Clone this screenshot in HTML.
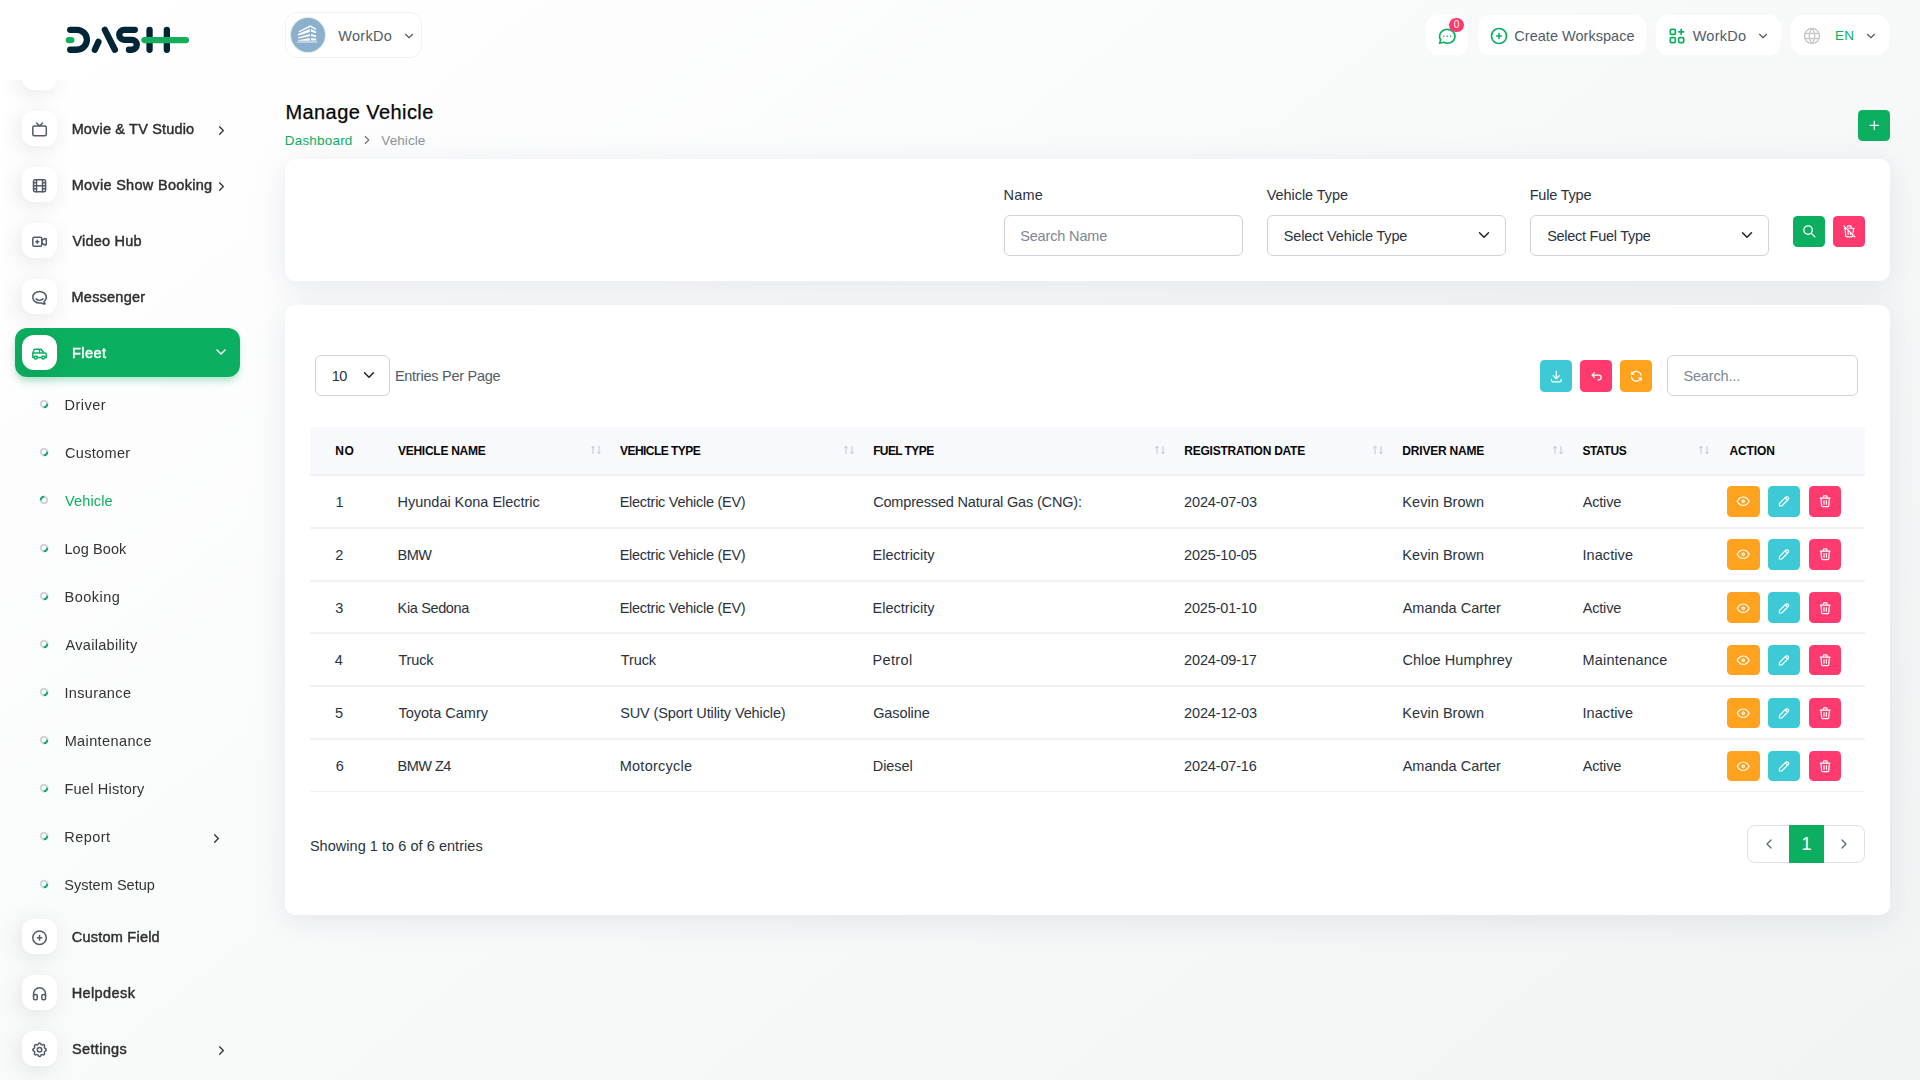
<!DOCTYPE html>
<html lang="en">
<head>
<meta charset="utf-8">
<title>Manage Vehicle</title>
<style>
*{box-sizing:border-box;margin:0;padding:0}
html,body{width:1920px;height:1080px;overflow:hidden}
body{font-family:"Liberation Sans",sans-serif;color:#293240;font-size:14px;
 background:linear-gradient(141.55deg,rgba(240,244,243,0) 3.46%,#f0f4f3 99.86%),#fff;position:relative}
.abs{position:absolute}
svg{display:block}
/* ---------- sidebar ---------- */
#sidebar{position:absolute;left:0;top:0;width:280px;height:1080px}
#sbscroll{position:absolute;left:0;top:80px;width:280px;height:1000px;overflow:hidden;will-change:transform}
.mi{position:absolute;left:15px;width:225px;height:48px;border-radius:12px}
.mi .ib{position:absolute;left:7px;top:6px;width:35px;height:35px;border-radius:12px;background:#fff;
 box-shadow:-3px 4px 23px rgba(0,0,0,.1)}
.mi .ib svg{position:absolute;left:8px;top:9px;width:18px;height:18px}
.mi .tx{position:absolute;left:57px;top:0;line-height:48px;font-size:14.5px;color:#2f2f2f;white-space:nowrap;-webkit-text-stroke:.45px #2f2f2f}
.mi .ar{position:absolute;right:11px;top:18px;width:15px;height:15px}
.mi.act .ar{right:11.5px;top:16.2px;width:16px;height:16px}
.mi.act .ib{top:6.8px}
.mi.act{margin-top:-.8px;height:48.8px;background:#0caf60;box-shadow:0 5px 7px -1px rgba(12,175,96,.3)}
.mi.act .tx{top:.8px;color:#fff;-webkit-text-stroke:.45px #fff}
.si{position:absolute;left:40px;height:48px;width:200px}
.si .bl{position:absolute;left:-1px;top:18px;width:10px;height:10px}
.si .tx{position:absolute;left:25px;top:0;line-height:48px;font-size:14.5px;color:#333;white-space:nowrap}
.si.on .tx{color:#0caf60}
.si .ar{position:absolute;right:15.6px;top:17.5px;width:15px;height:15px}
/* ---------- header ---------- */
.hb{position:absolute;top:15px;height:40px;background:#fff;border-radius:12px;white-space:nowrap}
.hb span{position:absolute;top:.8px;line-height:40px;font-size:14.5px;color:#525b69}
/* ---------- cards ---------- */
.card{position:absolute;background:#fff;border-radius:10px;box-shadow:0 6px 30px rgba(182,186,203,.3)}
.lbl{position:absolute;font-size:14.5px;color:#293240;line-height:20px;white-space:nowrap}
.inp{position:absolute;height:41px;border:1px solid #ced4da;border-radius:6px;background:#fff;
 font-size:14.5px;line-height:40.6px;padding-left:15px;color:#293240;white-space:nowrap}
.inp.ph{color:#7c8794}
.inp svg{position:absolute;right:15px;top:13.2px;width:12px;height:12px}
.btn{position:absolute;width:32px;height:32px;border-radius:4.5px}
.btn svg{position:absolute;left:8.7px;top:8.8px;width:14.6px;height:14.6px}
.h31{height:31px}
.h31 svg{top:8.1px;left:8.5px}
.rb{top:10.5px;height:30.5px}
.rb i{position:absolute;left:50%;top:0;width:0;height:0}
.rb i svg{left:-7.2px;top:8.1px;width:14.4px;height:14.4px}
.g{background:#0caf60}.r{background:#ff3a6e}.c{background:#3ec9d6}.o{background:#ffa21d}
/* ---------- table ---------- */
#thead{position:absolute;left:25px;top:122px;width:1555px;height:47.75px;background:#f8f9fd;border-bottom:1px solid #f1f1f1}
.th{position:absolute;top:0;line-height:48.5px;font-size:12px;font-weight:bold;color:#060606;white-space:nowrap}
.so{position:absolute;top:17.7px;width:12px;height:10px}
.tr{position:absolute;left:25px;width:1555px;height:52.85px;border-top:1px solid #f1f1f1;border-bottom:1px solid #f1f1f1}
.td{position:absolute;top:0;line-height:52px;font-size:14.5px;color:#293240;white-space:nowrap}
</style>
</head>
<body>
<div id="header"><div class="abs" style="left:285px;top:12px;width:137px;height:46px;background:#fff;border:1px solid #f1f1f1;border-radius:12px"><div class="abs" style="left:5px;top:5px;width:34px;height:34px;border-radius:50%;background:#8bafcc;box-shadow:0 0 0 1px #d9f0e3;overflow:hidden"><svg viewBox="0 0 34 34" width="34" height="34"><g fill="#fdfeff"><path d="M7.55 13.27L19.39 7.14L25.1 10.41V12.04L19.39 8.98L8.16 14.29z"/><path d="M6.94 16.12L18.78 11.02V13.88L6.94 17.76z"/><path d="M20 11.02L25.1 13.47V15.31L20 13.67z"/><path d="M6.94 19.39L18.78 15.92V18.37L7.14 20.61z"/><path d="M20 15.92L25.1 17.14V18.98L20 18.16z"/><path d="M7.55 22.24L18.78 20V22.65L7.14 22.86z"/><path d="M20 20.2L25.1 20.61V22.45H20z"/><path d="M5.92 23.06H26.33V25.1H5.92z" fill="#b9d0e2"/></g></svg></div><span id="h_ws" class="abs" style="left:52px;top:1px;line-height:44px;font-size:14.5px;color:#525b69;margin-left:0.20px;letter-spacing:0.301px;">WorkDo</span><svg viewBox="0 0 24 24" fill="none" stroke="#525b69" stroke-width="2" stroke-linecap="round" stroke-linejoin="round" style="position:absolute;left:115.7px;top:15.6px;width:14px;height:14px"><path d="M6 9l6 6l6 -6"/></svg></div>
<div class="hb" style="left:1426px;width:42px"><svg viewBox="0 0 24 24" fill="none" stroke="#0caf60" stroke-width="1.85" stroke-linecap="round" stroke-linejoin="round" style="position:absolute;left:11px;top:11px;width:20.6px;height:20.6px"><path d="M3 20l1.3 -3.9a9 8 0 1 1 3.4 2.9l-4.700 1"/><path d="M12 12v.01M8 12v.01M16 12v.01"/></svg><div class="abs" style="left:23px;top:3px;width:15px;height:14px;border-radius:7px;background:#ff3a6e;color:#fff;font-size:10px;line-height:13.5px;text-align:center">0</div></div>
<div class="hb" style="left:1478px;width:168px"><svg viewBox="0 0 24 24" fill="none" stroke="#0caf60" stroke-width="2" stroke-linecap="round" stroke-linejoin="round" style="position:absolute;left:11.4px;top:11px;width:20px;height:20px"><circle cx="12" cy="12" r="9"/><path d="M9 12h6M12 9v6"/></svg><span id="h_cw" style="left:36px;margin-left:0.35px;letter-spacing:0.024px;">Create Workspace</span></div>
<div class="hb" style="left:1656px;width:125px"><svg viewBox="0 0 24 24" fill="none" stroke="#0caf60" stroke-width="2" stroke-linecap="round" stroke-linejoin="round" style="position:absolute;left:11px;top:11px;width:20px;height:20px"><rect x="4" y="4" width="6" height="6" rx="1"/><rect x="4" y="14" width="6" height="6" rx="1"/><rect x="14" y="14" width="6" height="6" rx="1"/><path d="M14 7h6M17 4v6"/></svg><span id="h_wd" style="left:35px;margin-left:1.70px;letter-spacing:0.236px;">WorkDo</span><svg viewBox="0 0 24 24" fill="none" stroke="#525b69" stroke-width="2" stroke-linecap="round" stroke-linejoin="round" style="position:absolute;left:100px;top:13.6px;width:14px;height:14px"><path d="M6 9l6 6l6 -6"/></svg></div>
<div class="hb" style="left:1791px;width:98px"><svg viewBox="0 0 24 24" fill="none" stroke="#c9c9c9" stroke-width="1.6" stroke-linecap="round" stroke-linejoin="round" style="position:absolute;left:11px;top:11px;width:20px;height:20px"><circle cx="12" cy="12" r="9"/><path d="M3.6 9h16.8M3.6 15h16.8M11.5 3a17 17 0 0 0 0 18M12.5 3a17 17 0 0 1 0 18"/></svg><span id="h_en" style="left:44px;color:#0caf60;font-size:13.6px;margin-left:-0.01px;letter-spacing:0.290px;">EN</span><svg viewBox="0 0 24 24" fill="none" stroke="#525b69" stroke-width="2" stroke-linecap="round" stroke-linejoin="round" style="position:absolute;left:73px;top:13.6px;width:14px;height:14px"><path d="M6 9l6 6l6 -6"/></svg></div></div>
<div id="main"><div id="ttl" class="abs" style="left:285px;top:97.5px;font-size:20px;line-height:28px;color:#060606;white-space:nowrap;-webkit-text-stroke:.25px #060606;margin-left:0.40px;letter-spacing:0.435px;">Manage Vehicle</div>
<div id="bc1" class="abs" style="left:285px;top:131.2px;font-size:13.5px;line-height:20px;white-space:nowrap;color:#0caf60;margin-left:-0.22px;letter-spacing:0.194px;">Dashboard</div>
<svg viewBox="0 0 24 24" fill="none" stroke="#6c757d" stroke-width="2" stroke-linecap="round" stroke-linejoin="round" style="position:absolute;left:359.9px;top:133.1px;width:14px;height:14px"><path d="M9 6l6 6l-6 6"/></svg>
<div id="bc2" class="abs" style="left:382px;top:131.2px;font-size:13.5px;line-height:20px;white-space:nowrap;color:#8a939c;margin-left:-0.69px;letter-spacing:0.075px;">Vehicle</div>
<div class="btn g h31" style="left:1858px;top:110px"><svg viewBox="0 0 24 24" fill="none" stroke="#fff" stroke-width="2" stroke-linecap="round" stroke-linejoin="round"><path d="M12 5v14M5 12h14"/></svg></div>
<div class="card" style="left:285px;top:159px;width:1605px;height:122px">
<div id="l_0" class="lbl" style="left:719px;top:26px;margin-left:-0.40px;letter-spacing:0.138px;">Name</div>
<div class="inp ph" style="left:719px;top:56px;width:239px"><span id="i_0" style="margin-left:0.14px;letter-spacing:-0.140px;">Search Name</span></div>
<div id="l_1" class="lbl" style="left:982px;top:26px;margin-left:-0.25px;letter-spacing:-0.067px;">Vehicle Type</div>
<div class="inp" style="left:982px;top:56px;width:239px"><span id="i_1" style="margin-left:0.77px;letter-spacing:-0.146px;">Select Vehicle Type</span><svg viewBox="0 0 16 16" fill="none" stroke="#1f2328" stroke-width="2" stroke-linecap="round" stroke-linejoin="round"><path d="M2 5l6 6l6 -6"/></svg></div>
<div id="l_2" class="lbl" style="left:1245px;top:26px;margin-left:-0.30px;letter-spacing:-0.206px;">Fule Type</div>
<div class="inp" style="left:1245px;top:56px;width:239px"><span id="i_2" style="margin-left:1.18px;letter-spacing:-0.275px;">Select Fuel Type</span><svg viewBox="0 0 16 16" fill="none" stroke="#1f2328" stroke-width="2" stroke-linecap="round" stroke-linejoin="round"><path d="M2 5l6 6l6 -6"/></svg></div>
<div class="btn g h31" style="left:1508px;top:57px"><svg viewBox="0 0 24 24" fill="none" stroke="#fff" stroke-width="2.2" stroke-linecap="round" stroke-linejoin="round"><circle cx="10" cy="10" r="7"/><path d="M21 21l-6 -6"/></svg></div>
<div class="btn r h31" style="left:1548px;top:57px"><svg viewBox="0 0 24 24" fill="none" stroke="#fff" stroke-width="2" stroke-linecap="round" stroke-linejoin="round"><path d="M3 3l18 18M4 7h3m4 0h9M10 11v6M14 14v3M5 7l1 12a2 2 0 0 0 2 2h8a2 2 0 0 0 2 -2l.077 -.923M18.384 14.373l.616 -7.373M9 5v-1a1 1 0 0 1 1 -1h4a1 1 0 0 1 1 1v3"/></svg></div>
</div>
<div class="card" style="left:285px;top:305px;width:1605px;height:610px">
<div class="inp" style="left:30px;top:50px;width:75px;height:41px;padding-left:17px"><span id="p_10" style="margin-left:-1.18px;letter-spacing:-0.559px;">10</span><svg style="right:13.9px" viewBox="0 0 16 16" fill="none" stroke="#1f2328" stroke-width="2" stroke-linecap="round" stroke-linejoin="round"><path d="M2 5l6 6l6 -6"/></svg></div>
<div id="p_epp" class="lbl" style="left:110px;top:61px;color:#525b69;margin-left:-0.12px;letter-spacing:-0.260px;">Entries Per Page</div>
<div class="btn c" style="left:1255px;top:55px"><svg viewBox="0 0 24 24" fill="none" stroke="#fff" stroke-width="2" stroke-linecap="round" stroke-linejoin="round"><path d="M4 17v2a2 2 0 0 0 2 2h12a2 2 0 0 0 2 -2v-2M7 11l5 5l5 -5M12 4v12"/></svg></div>
<div class="btn r" style="left:1295px;top:55px"><svg viewBox="0 0 24 24" fill="none" stroke="#fff" stroke-width="2" stroke-linecap="round" stroke-linejoin="round"><path d="M9 14l-4 -4l4 -4M5 10h11a4 4 0 1 1 0 8h-1"/></svg></div>
<div class="btn o" style="left:1335px;top:55px"><svg viewBox="0 0 24 24" fill="none" stroke="#fff" stroke-width="2" stroke-linecap="round" stroke-linejoin="round"><path d="M20 11a8.1 8.1 0 0 0 -15.500 -2m-.5 -4v4h4M4 13a8.1 8.100 0 0 0 15.500 2m.5 4v-4h-4"/></svg></div>
<div class="inp ph" style="left:1382px;top:50px;width:191px;height:41px;padding-left:16px"><span id="p_search" style="margin-left:-0.61px;letter-spacing:-0.156px;">Search...</span></div>
<div id="thead">
<span id="th_0" class="th" style="left:25px;margin-left:0.34px;letter-spacing:0.397px;">NO</span>
<span id="th_1" class="th" style="left:88px;margin-left:-0.05px;letter-spacing:-0.263px;">VEHICLE NAME</span>
<svg class="so" style="left:280.4px" viewBox="0 0 12 10" fill="none" stroke="#c3c6cc" stroke-width="1" stroke-linecap="round" stroke-linejoin="round"><path d="M3 8.7V1.5M1.6 3L3 1.4L4.4 3M9 1.3V8.5M7.6 7L9 8.6L10.4 7"/></svg>
<span id="th_2" class="th" style="left:310px;margin-left:-0.05px;letter-spacing:-0.535px;">VEHICLE TYPE</span>
<svg class="so" style="left:533.4px" viewBox="0 0 12 10" fill="none" stroke="#c3c6cc" stroke-width="1" stroke-linecap="round" stroke-linejoin="round"><path d="M3 8.7V1.5M1.6 3L3 1.4L4.4 3M9 1.3V8.5M7.6 7L9 8.6L10.4 7"/></svg>
<span id="th_3" class="th" style="left:563px;margin-left:0.14px;letter-spacing:-0.593px;">FUEL TYPE</span>
<svg class="so" style="left:844.4px" viewBox="0 0 12 10" fill="none" stroke="#c3c6cc" stroke-width="1" stroke-linecap="round" stroke-linejoin="round"><path d="M3 8.7V1.5M1.6 3L3 1.4L4.4 3M9 1.3V8.5M7.6 7L9 8.6L10.4 7"/></svg>
<span id="th_4" class="th" style="left:874px;margin-left:0.34px;letter-spacing:-0.251px;">REGISTRATION DATE</span>
<svg class="so" style="left:1062.4px" viewBox="0 0 12 10" fill="none" stroke="#c3c6cc" stroke-width="1" stroke-linecap="round" stroke-linejoin="round"><path d="M3 8.7V1.5M1.6 3L3 1.4L4.4 3M9 1.3V8.5M7.6 7L9 8.6L10.4 7"/></svg>
<span id="th_5" class="th" style="left:1092px;margin-left:0.34px;letter-spacing:-0.199px;">DRIVER NAME</span>
<svg class="so" style="left:1242.4px" viewBox="0 0 12 10" fill="none" stroke="#c3c6cc" stroke-width="1" stroke-linecap="round" stroke-linejoin="round"><path d="M3 8.7V1.5M1.6 3L3 1.4L4.4 3M9 1.3V8.5M7.6 7L9 8.6L10.4 7"/></svg>
<span id="th_6" class="th" style="left:1272px;margin-left:0.41px;letter-spacing:-0.385px;">STATUS</span>
<svg class="so" style="left:1388.4px" viewBox="0 0 12 10" fill="none" stroke="#c3c6cc" stroke-width="1" stroke-linecap="round" stroke-linejoin="round"><path d="M3 8.7V1.5M1.6 3L3 1.4L4.4 3M9 1.3V8.5M7.6 7L9 8.6L10.4 7"/></svg>
<span id="th_7" class="th" style="left:1419px;margin-left:0.40px;letter-spacing:-0.116px;">ACTION</span>
</div>
<div class="tr" style="top:169.75px;height:52.85px">
<span id="c_0_0" class="td" style="left:25px;margin-left:0.62px;">1</span>
<span id="c_0_1" class="td" style="left:88px;margin-left:-0.40px;letter-spacing:-0.027px;">Hyundai Kona Electric</span>
<span id="c_0_2" class="td" style="left:310px;margin-left:-0.30px;letter-spacing:-0.269px;">Electric Vehicle (EV)</span>
<span id="c_0_3" class="td" style="left:563px;margin-left:0.15px;letter-spacing:-0.166px;">Compressed Natural Gas (CNG):</span>
<span id="c_0_4" class="td" style="left:874px;margin-left:0.08px;letter-spacing:-0.144px;">2024-07-03</span>
<span id="c_0_5" class="td" style="left:1092px;margin-left:0.34px;letter-spacing:0.042px;">Kevin Brown</span>
<span id="c_0_6" class="td" style="left:1272px;margin-left:0.68px;letter-spacing:-0.175px;">Active</span>
<div class="btn o rb" style="left:1417px;width:33px"><i><svg viewBox="0 0 24 24" fill="none" stroke="#fff" stroke-width="2" stroke-linecap="round" stroke-linejoin="round"><circle cx="12" cy="12" r="2"/><path d="M22 12c-2.667 4.667 -6 7 -10 7s-7.333 -2.333 -10 -7c2.667 -4.667 6 -7 10 -7s7.333 2.333 10 7"/></svg></i></div>
<div class="btn c rb" style="left:1458px"><i><svg viewBox="0 0 24 24" fill="none" stroke="#fff" stroke-width="2" stroke-linecap="round" stroke-linejoin="round"><path d="M4 20h4l10.500 -10.500a1.500 1.500 0 0 0 -4 -4l-10.500 10.500v4M13.500 6.500l4 4"/></svg></i></div>
<div class="btn r rb" style="left:1499px"><i><svg viewBox="0 0 24 24" fill="none" stroke="#fff" stroke-width="2" stroke-linecap="round" stroke-linejoin="round"><path d="M4 7h16M10 11v6M14 11v6M5 7l1 12a2 2 0 0 0 2 2h8a2 2 0 0 0 2 -2l1 -12M9 7v-3a1 1 0 0 1 1 -1h4a1 1 0 0 1 1 1v3"/></svg></i></div>
</div>
<div class="tr" style="top:222.60px;height:53.35px">
<span id="c_1_0" class="td" style="left:25px;margin-left:0.37px;">2</span>
<span id="c_1_1" class="td" style="left:88px;margin-left:-0.40px;letter-spacing:-0.576px;">BMW</span>
<span id="c_1_2" class="td" style="left:310px;margin-left:-0.30px;letter-spacing:-0.269px;">Electric Vehicle (EV)</span>
<span id="c_1_3" class="td" style="left:563px;margin-left:-0.40px;letter-spacing:-0.003px;">Electricity</span>
<span id="c_1_4" class="td" style="left:874px;margin-left:0.08px;letter-spacing:-0.166px;">2025-10-05</span>
<span id="c_1_5" class="td" style="left:1092px;margin-left:0.34px;letter-spacing:0.042px;">Kevin Brown</span>
<span id="c_1_6" class="td" style="left:1272px;margin-left:0.45px;letter-spacing:0.081px;">Inactive</span>
<div class="btn o rb" style="left:1417px;width:33px"><i><svg viewBox="0 0 24 24" fill="none" stroke="#fff" stroke-width="2" stroke-linecap="round" stroke-linejoin="round"><circle cx="12" cy="12" r="2"/><path d="M22 12c-2.667 4.667 -6 7 -10 7s-7.333 -2.333 -10 -7c2.667 -4.667 6 -7 10 -7s7.333 2.333 10 7"/></svg></i></div>
<div class="btn c rb" style="left:1458px"><i><svg viewBox="0 0 24 24" fill="none" stroke="#fff" stroke-width="2" stroke-linecap="round" stroke-linejoin="round"><path d="M4 20h4l10.500 -10.500a1.500 1.500 0 0 0 -4 -4l-10.500 10.500v4M13.500 6.500l4 4"/></svg></i></div>
<div class="btn r rb" style="left:1499px"><i><svg viewBox="0 0 24 24" fill="none" stroke="#fff" stroke-width="2" stroke-linecap="round" stroke-linejoin="round"><path d="M4 7h16M10 11v6M14 11v6M5 7l1 12a2 2 0 0 0 2 2h8a2 2 0 0 0 2 -2l1 -12M9 7v-3a1 1 0 0 1 1 -1h4a1 1 0 0 1 1 1v3"/></svg></i></div>
</div>
<div class="tr" style="top:275.95px;height:52.35px">
<span id="c_2_0" class="td" style="left:25px;margin-left:0.36px;">3</span>
<span id="c_2_1" class="td" style="left:88px;margin-left:-0.40px;letter-spacing:-0.363px;">Kia Sedona</span>
<span id="c_2_2" class="td" style="left:310px;margin-left:-0.30px;letter-spacing:-0.269px;">Electric Vehicle (EV)</span>
<span id="c_2_3" class="td" style="left:563px;margin-left:-0.40px;letter-spacing:-0.003px;">Electricity</span>
<span id="c_2_4" class="td" style="left:874px;margin-left:0.08px;letter-spacing:-0.171px;">2025-01-10</span>
<span id="c_2_5" class="td" style="left:1092px;margin-left:0.68px;letter-spacing:-0.006px;">Amanda Carter</span>
<span id="c_2_6" class="td" style="left:1272px;margin-left:0.68px;letter-spacing:-0.175px;">Active</span>
<div class="btn o rb" style="left:1417px;width:33px"><i><svg viewBox="0 0 24 24" fill="none" stroke="#fff" stroke-width="2" stroke-linecap="round" stroke-linejoin="round"><circle cx="12" cy="12" r="2"/><path d="M22 12c-2.667 4.667 -6 7 -10 7s-7.333 -2.333 -10 -7c2.667 -4.667 6 -7 10 -7s7.333 2.333 10 7"/></svg></i></div>
<div class="btn c rb" style="left:1458px"><i><svg viewBox="0 0 24 24" fill="none" stroke="#fff" stroke-width="2" stroke-linecap="round" stroke-linejoin="round"><path d="M4 20h4l10.500 -10.500a1.500 1.500 0 0 0 -4 -4l-10.500 10.500v4M13.500 6.500l4 4"/></svg></i></div>
<div class="btn r rb" style="left:1499px"><i><svg viewBox="0 0 24 24" fill="none" stroke="#fff" stroke-width="2" stroke-linecap="round" stroke-linejoin="round"><path d="M4 7h16M10 11v6M14 11v6M5 7l1 12a2 2 0 0 0 2 2h8a2 2 0 0 0 2 -2l1 -12M9 7v-3a1 1 0 0 1 1 -1h4a1 1 0 0 1 1 1v3"/></svg></i></div>
</div>
<div class="tr" style="top:328.30px;height:52.85px">
<span id="c_3_0" class="td" style="left:25px;margin-left:-0.31px;">4</span>
<span id="c_3_1" class="td" style="left:88px;margin-left:0.47px;letter-spacing:-0.166px;">Truck</span>
<span id="c_3_2" class="td" style="left:310px;margin-left:0.79px;letter-spacing:-0.100px;">Truck</span>
<span id="c_3_3" class="td" style="left:563px;margin-left:-0.40px;letter-spacing:0.330px;">Petrol</span>
<span id="c_3_4" class="td" style="left:874px;margin-left:0.08px;letter-spacing:-0.149px;">2024-09-17</span>
<span id="c_3_5" class="td" style="left:1092px;margin-left:0.40px;letter-spacing:0.077px;">Chloe Humphrey</span>
<span id="c_3_6" class="td" style="left:1272px;margin-left:0.60px;letter-spacing:0.174px;">Maintenance</span>
<div class="btn o rb" style="left:1417px;width:33px"><i><svg viewBox="0 0 24 24" fill="none" stroke="#fff" stroke-width="2" stroke-linecap="round" stroke-linejoin="round"><circle cx="12" cy="12" r="2"/><path d="M22 12c-2.667 4.667 -6 7 -10 7s-7.333 -2.333 -10 -7c2.667 -4.667 6 -7 10 -7s7.333 2.333 10 7"/></svg></i></div>
<div class="btn c rb" style="left:1458px"><i><svg viewBox="0 0 24 24" fill="none" stroke="#fff" stroke-width="2" stroke-linecap="round" stroke-linejoin="round"><path d="M4 20h4l10.500 -10.500a1.500 1.500 0 0 0 -4 -4l-10.500 10.500v4M13.500 6.500l4 4"/></svg></i></div>
<div class="btn r rb" style="left:1499px"><i><svg viewBox="0 0 24 24" fill="none" stroke="#fff" stroke-width="2" stroke-linecap="round" stroke-linejoin="round"><path d="M4 7h16M10 11v6M14 11v6M5 7l1 12a2 2 0 0 0 2 2h8a2 2 0 0 0 2 -2l1 -12M9 7v-3a1 1 0 0 1 1 -1h4a1 1 0 0 1 1 1v3"/></svg></i></div>
</div>
<div class="tr" style="top:381.15px;height:52.85px">
<span id="c_4_0" class="td" style="left:25px;margin-left:-0.08px;">5</span>
<span id="c_4_1" class="td" style="left:88px;margin-left:0.47px;letter-spacing:0.005px;">Toyota Camry</span>
<span id="c_4_2" class="td" style="left:310px;margin-left:0.18px;letter-spacing:-0.111px;">SUV (Sport Utility Vehicle)</span>
<span id="c_4_3" class="td" style="left:563px;margin-left:0.15px;letter-spacing:-0.083px;">Gasoline</span>
<span id="c_4_4" class="td" style="left:874px;margin-left:0.08px;letter-spacing:-0.144px;">2024-12-03</span>
<span id="c_4_5" class="td" style="left:1092px;margin-left:0.34px;letter-spacing:0.042px;">Kevin Brown</span>
<span id="c_4_6" class="td" style="left:1272px;margin-left:0.45px;letter-spacing:0.081px;">Inactive</span>
<div class="btn o rb" style="left:1417px;width:33px"><i><svg viewBox="0 0 24 24" fill="none" stroke="#fff" stroke-width="2" stroke-linecap="round" stroke-linejoin="round"><circle cx="12" cy="12" r="2"/><path d="M22 12c-2.667 4.667 -6 7 -10 7s-7.333 -2.333 -10 -7c2.667 -4.667 6 -7 10 -7s7.333 2.333 10 7"/></svg></i></div>
<div class="btn c rb" style="left:1458px"><i><svg viewBox="0 0 24 24" fill="none" stroke="#fff" stroke-width="2" stroke-linecap="round" stroke-linejoin="round"><path d="M4 20h4l10.500 -10.500a1.500 1.500 0 0 0 -4 -4l-10.500 10.500v4M13.500 6.500l4 4"/></svg></i></div>
<div class="btn r rb" style="left:1499px"><i><svg viewBox="0 0 24 24" fill="none" stroke="#fff" stroke-width="2" stroke-linecap="round" stroke-linejoin="round"><path d="M4 7h16M10 11v6M14 11v6M5 7l1 12a2 2 0 0 0 2 2h8a2 2 0 0 0 2 -2l1 -12M9 7v-3a1 1 0 0 1 1 -1h4a1 1 0 0 1 1 1v3"/></svg></i></div>
</div>
<div class="tr" style="top:434.00px;height:52.85px">
<span id="c_5_0" class="td" style="left:25px;margin-left:0.69px;">6</span>
<span id="c_5_1" class="td" style="left:88px;margin-left:-0.40px;letter-spacing:-0.512px;">BMW Z4</span>
<span id="c_5_2" class="td" style="left:310px;margin-left:-0.30px;letter-spacing:0.258px;">Motorcycle</span>
<span id="c_5_3" class="td" style="left:563px;margin-left:-0.16px;letter-spacing:-0.088px;">Diesel</span>
<span id="c_5_4" class="td" style="left:874px;margin-left:0.08px;letter-spacing:-0.156px;">2024-07-16</span>
<span id="c_5_5" class="td" style="left:1092px;margin-left:0.68px;letter-spacing:-0.006px;">Amanda Carter</span>
<span id="c_5_6" class="td" style="left:1272px;margin-left:0.68px;letter-spacing:-0.175px;">Active</span>
<div class="btn o rb" style="left:1417px;width:33px"><i><svg viewBox="0 0 24 24" fill="none" stroke="#fff" stroke-width="2" stroke-linecap="round" stroke-linejoin="round"><circle cx="12" cy="12" r="2"/><path d="M22 12c-2.667 4.667 -6 7 -10 7s-7.333 -2.333 -10 -7c2.667 -4.667 6 -7 10 -7s7.333 2.333 10 7"/></svg></i></div>
<div class="btn c rb" style="left:1458px"><i><svg viewBox="0 0 24 24" fill="none" stroke="#fff" stroke-width="2" stroke-linecap="round" stroke-linejoin="round"><path d="M4 20h4l10.500 -10.500a1.500 1.500 0 0 0 -4 -4l-10.500 10.500v4M13.500 6.500l4 4"/></svg></i></div>
<div class="btn r rb" style="left:1499px"><i><svg viewBox="0 0 24 24" fill="none" stroke="#fff" stroke-width="2" stroke-linecap="round" stroke-linejoin="round"><path d="M4 7h16M10 11v6M14 11v6M5 7l1 12a2 2 0 0 0 2 2h8a2 2 0 0 0 2 -2l1 -12M9 7v-3a1 1 0 0 1 1 -1h4a1 1 0 0 1 1 1v3"/></svg></i></div>
</div>
<div id="showing" class="lbl" style="left:25px;top:531px;color:#293240;margin-left:-0.12px;letter-spacing:0.041px;">Showing 1 to 6 of 6 entries</div>
<div class="abs" style="left:1462px;top:520px;width:118px;height:38px;border:1px solid #dee2e6;border-radius:8px;background:#fff"><svg viewBox="0 0 24 24" fill="none" stroke="#5f6b7a" stroke-width="2" stroke-linecap="round" stroke-linejoin="round" style="position:absolute;left:13px;top:10px;width:16px;height:16px"><path d="M15 6l-6 6l6 6"/></svg><div class="abs" style="left:40.8px;top:-1px;width:35.2px;height:38px;background:#0caf60;color:#fff;font-size:18px;line-height:38px;text-align:center">1</div><svg viewBox="0 0 24 24" fill="none" stroke="#5f6b7a" stroke-width="2" stroke-linecap="round" stroke-linejoin="round" style="position:absolute;left:88px;top:10px;width:16px;height:16px"><path d="M9 6l6 6l-6 6"/></svg></div>
</div></div>
<div id="sidebar">
 <div id="sbscroll"><div class="mi" style="top:-31px"><div class="ib"></div></div>
<div class="mi" style="top:25px"><div class="ib"><svg viewBox="-0.73 -1.0 24 24" fill="none" stroke="#525b69" stroke-width="2" stroke-linecap="round" stroke-linejoin="round"><rect x="3" y="7" width="18" height="13" rx="2"/><path d="M16 3l-4 4l-4 -4"/></svg></div><span id="m_tv" class="tx" style="margin-left:-0.39px;letter-spacing:0.167px;">Movie &amp; TV Studio</span><svg viewBox="0 0 24 24" fill="none" stroke="#333" stroke-width="2" stroke-linecap="round" stroke-linejoin="round" class="ar"><path d="M9 6l6 6l-6 6"/></svg></div>
<div class="mi" style="top:81px"><div class="ib"><svg viewBox="-0.73 -1.0 24 24" fill="none" stroke="#525b69" stroke-width="2" stroke-linecap="round" stroke-linejoin="round"><rect x="4" y="4" width="16" height="16" rx="2"/><path d="M8 4v16M16 4v16M4 8h4M4 16h4M4 12h16M16 8h4M16 16h4"/></svg></div><span id="m_movie" class="tx" style="margin-left:-0.39px;letter-spacing:0.303px;">Movie Show Booking</span><svg viewBox="0 0 24 24" fill="none" stroke="#333" stroke-width="2" stroke-linecap="round" stroke-linejoin="round" class="ar"><path d="M9 6l6 6l-6 6"/></svg></div>
<div class="mi" style="top:137px"><div class="ib"><svg viewBox="-0.73 -1.0 24 24" fill="none" stroke="#525b69" stroke-width="2" stroke-linecap="round" stroke-linejoin="round"><path d="M15 10l4.553 -2.276a1 1 0 0 1 1.447 .894v6.764a1 1 0 0 1 -1.447 .894l-4.553 -2.276v-4z"/><rect x="3" y="6" width="12" height="12" rx="2"/><path d="M7 12h4M9 10v4"/></svg></div><span id="m_video" class="tx" style="margin-left:0.47px;letter-spacing:0.209px;">Video Hub</span></div>
<div class="mi" style="top:193px"><div class="ib"><svg viewBox="-0.73 -1.0 24 24" fill="none" stroke="#525b69" stroke-width="2" stroke-linecap="round" stroke-linejoin="round"><path d="M17.802 17.292s.077 -.055 .2 -.149c1.843 -1.425 3 -3.49 3 -5.789c0 -4.286 -4.03 -7.764 -9 -7.764c-4.97 0 -9 3.478 -9 7.764c0 4.288 4.03 7.646 9 7.646c.424 0 1.12 -.028 2.088 -.084c1.262 .82 3.104 1.493 4.716 1.493c.499 0 .734 -.41 .414 -.828c-.486 -.596 -1.156 -1.551 -1.416 -2.29z"/><path d="M7.5 13.5c2.5 2.5 6.5 2.5 9 0"/></svg></div><span id="m_msg" class="tx" style="margin-left:-0.48px;letter-spacing:0.227px;">Messenger</span></div>
<div class="mi act" style="top:249px"><div class="ib"><svg viewBox="-0.73 -1.0 24 24" fill="none" stroke="#0caf60" stroke-width="2" stroke-linecap="round" stroke-linejoin="round"><circle cx="7" cy="17" r="2"/><circle cx="17" cy="17" r="2"/><path d="M5 17h-2v-6l2 -5h9l4 5h1a2 2 0 0 1 2 2v4h-2m-4 0h-6m-6 -6h15m-6 0v-5"/></svg></div><span id="m_fleet" class="tx" style="margin-left:-0.06px;letter-spacing:0.464px;">Fleet</span><svg viewBox="0 0 24 24" fill="none" stroke="#fff" stroke-width="2" stroke-linecap="round" stroke-linejoin="round" class="ar"><path d="M6 9l6 6l6 -6"/></svg></div>
<div class="si" style="top:301px"><svg class="bl" viewBox="0 0 10 10"><circle cx="5" cy="5" r="3.25" fill="none" stroke="#cdd2de" stroke-width="2"/><path d="M8.25 4.8A3.25 3.25 0 0 1 4.8 8.25" stroke="#0caf60" stroke-width="2" fill="none"/></svg><span id="s_0" class="tx" style="margin-left:-0.42px;letter-spacing:0.440px;">Driver</span></div>
<div class="si" style="top:349px"><svg class="bl" viewBox="0 0 10 10"><circle cx="5" cy="5" r="3.25" fill="none" stroke="#cdd2de" stroke-width="2"/><path d="M8.25 4.8A3.25 3.25 0 0 1 4.8 8.25" stroke="#0caf60" stroke-width="2" fill="none"/></svg><span id="s_1" class="tx" style="margin-left:-0.09px;letter-spacing:0.339px;">Customer</span></div>
<div class="si on" style="top:397px"><svg class="bl" viewBox="0 0 10 10"><circle cx="5" cy="5" r="3.25" fill="none" stroke="#cdd2de" stroke-width="2"/><path d="M1.75 5.2A3.25 3.25 0 0 1 5.2 1.75" stroke="#0caf60" stroke-width="2" fill="none"/></svg><span id="s_2" class="tx" style="margin-left:0.10px;letter-spacing:0.124px;">Vehicle</span></div>
<div class="si" style="top:445px"><svg class="bl" viewBox="0 0 10 10"><circle cx="5" cy="5" r="3.25" fill="none" stroke="#cdd2de" stroke-width="2"/><path d="M8.25 4.8A3.25 3.25 0 0 1 4.8 8.25" stroke="#0caf60" stroke-width="2" fill="none"/></svg><span id="s_3" class="tx" style="margin-left:-0.54px;letter-spacing:0.075px;">Log Book</span></div>
<div class="si" style="top:493px"><svg class="bl" viewBox="0 0 10 10"><circle cx="5" cy="5" r="3.25" fill="none" stroke="#cdd2de" stroke-width="2"/><path d="M8.25 4.8A3.25 3.25 0 0 1 4.8 8.25" stroke="#0caf60" stroke-width="2" fill="none"/></svg><span id="s_4" class="tx" style="margin-left:-0.54px;letter-spacing:0.493px;">Booking</span></div>
<div class="si" style="top:541px"><svg class="bl" viewBox="0 0 10 10"><circle cx="5" cy="5" r="3.25" fill="none" stroke="#cdd2de" stroke-width="2"/><path d="M8.25 4.8A3.25 3.25 0 0 1 4.8 8.25" stroke="#0caf60" stroke-width="2" fill="none"/></svg><span id="s_5" class="tx" style="margin-left:0.49px;letter-spacing:0.312px;">Availability</span></div>
<div class="si" style="top:589px"><svg class="bl" viewBox="0 0 10 10"><circle cx="5" cy="5" r="3.25" fill="none" stroke="#cdd2de" stroke-width="2"/><path d="M8.25 4.8A3.25 3.25 0 0 1 4.8 8.25" stroke="#0caf60" stroke-width="2" fill="none"/></svg><span id="s_6" class="tx" style="margin-left:-0.60px;letter-spacing:0.357px;">Insurance</span></div>
<div class="si" style="top:637px"><svg class="bl" viewBox="0 0 10 10"><circle cx="5" cy="5" r="3.25" fill="none" stroke="#cdd2de" stroke-width="2"/><path d="M8.25 4.8A3.25 3.25 0 0 1 4.8 8.25" stroke="#0caf60" stroke-width="2" fill="none"/></svg><span id="s_7" class="tx" style="margin-left:-0.39px;letter-spacing:0.391px;">Maintenance</span></div>
<div class="si" style="top:685px"><svg class="bl" viewBox="0 0 10 10"><circle cx="5" cy="5" r="3.25" fill="none" stroke="#cdd2de" stroke-width="2"/><path d="M8.25 4.8A3.25 3.25 0 0 1 4.8 8.25" stroke="#0caf60" stroke-width="2" fill="none"/></svg><span id="s_8" class="tx" style="margin-left:-0.57px;letter-spacing:0.234px;">Fuel History</span></div>
<div class="si" style="top:733px"><svg class="bl" viewBox="0 0 10 10"><circle cx="5" cy="5" r="3.25" fill="none" stroke="#cdd2de" stroke-width="2"/><path d="M8.25 4.8A3.25 3.25 0 0 1 4.8 8.25" stroke="#0caf60" stroke-width="2" fill="none"/></svg><span id="s_9" class="tx" style="margin-left:-0.66px;letter-spacing:0.431px;">Report</span><svg viewBox="0 0 24 24" fill="none" stroke="#333" stroke-width="2" stroke-linecap="round" stroke-linejoin="round" class="ar"><path d="M9 6l6 6l-6 6"/></svg></div>
<div class="si" style="top:781px"><svg class="bl" viewBox="0 0 10 10"><circle cx="5" cy="5" r="3.25" fill="none" stroke="#cdd2de" stroke-width="2"/><path d="M8.25 4.8A3.25 3.25 0 0 1 4.8 8.25" stroke="#0caf60" stroke-width="2" fill="none"/></svg><span id="s_10" class="tx" style="margin-left:-0.70px;letter-spacing:0.028px;">System Setup</span></div>
<div class="mi" style="top:833px"><div class="ib"><svg viewBox="-0.73 -1.0 24 24" fill="none" stroke="#525b69" stroke-width="2" stroke-linecap="round" stroke-linejoin="round"><circle cx="12" cy="12" r="9"/><path d="M9 12h6M12 9v6"/></svg></div><span id="m_custom" class="tx" style="margin-left:-0.25px;letter-spacing:0.229px;">Custom Field</span></div>
<div class="mi" style="top:889px"><div class="ib"><svg viewBox="-0.73 -1.0 24 24" fill="none" stroke="#525b69" stroke-width="2" stroke-linecap="round" stroke-linejoin="round"><rect x="4" y="13" width="5" height="7" rx="2"/><rect x="15" y="13" width="5" height="7" rx="2"/><path d="M4 15v-3a8 8 0 0 1 16 0v3"/></svg></div><span id="m_help" class="tx" style="margin-left:-0.39px;letter-spacing:0.411px;">Helpdesk</span></div>
<div class="mi" style="top:945px"><div class="ib"><svg viewBox="-0.73 -1.0 24 24" fill="none" stroke="#525b69" stroke-width="2" stroke-linecap="round" stroke-linejoin="round"><path d="M10.325 4.317c.426 -1.756 2.924 -1.756 3.35 0a1.724 1.724 0 0 0 2.573 1.066c1.543 -.94 3.31 .826 2.37 2.37a1.724 1.724 0 0 0 1.065 2.572c1.756 .426 1.756 2.924 0 3.35a1.724 1.724 0 0 0 -1.066 2.573c.94 1.543 -.826 3.31 -2.37 2.37a1.724 1.724 0 0 0 -2.572 1.065c-.426 1.756 -2.924 1.756 -3.35 0a1.724 1.724 0 0 0 -2.573 -1.066c-1.543 .94 -3.31 -.826 -2.37 -2.37a1.724 1.724 0 0 0 -1.065 -2.572c-1.756 -.426 -1.756 -2.924 0 -3.35a1.724 1.724 0 0 0 1.066 -2.573c-.94 -1.543 .826 -3.31 2.37 -2.37c1 .608 2.296 .07 2.572 -1.065z"/><circle cx="12" cy="12" r="3"/></svg></div><span id="m_set" class="tx" style="margin-left:0.08px;letter-spacing:0.321px;">Settings</span><svg viewBox="0 0 24 24" fill="none" stroke="#333" stroke-width="2" stroke-linecap="round" stroke-linejoin="round" class="ar"><path d="M9 6l6 6l-6 6"/></svg></div></div>
 <div id="logo" class="abs" style="left:0;top:0;width:280px;height:80px"><svg width="280" height="80" viewBox="0 0 280 80" role="img" aria-label="DASH logo" style="position:absolute;left:0;top:0"><title>DASH</title><g fill="none" stroke-linecap="round" stroke-linejoin="round" stroke-width="6.3"><g stroke="#002537"><path d="M70.2 29.85H76.95A9.95 9.95 0 0 1 76.95 49.76H70.2"/><path d="M94.86 49.76L98.44 41.88"/><path d="M104.86 29.85L114.85 49.76"/><path d="M134.8 29.85H124.2A4.97 4.97 0 0 0 124.2 39.8H131.8A4.98 4.98 0 0 1 131.8 49.76H128.9"/><path d="M149.56 29.85V49.76M166.85 29.85V49.76"/></g><g stroke="#14ae5c"><path d="M68.85 40.05H71.25M144.46 40.05H185.96"/></g></g></svg><span style="position:absolute;left:66px;top:26px;font-size:24px;line-height:28px;font-weight:bold;color:transparent;letter-spacing:6px;white-space:nowrap">DASH</span></div>
</div>
</body>
</html>
